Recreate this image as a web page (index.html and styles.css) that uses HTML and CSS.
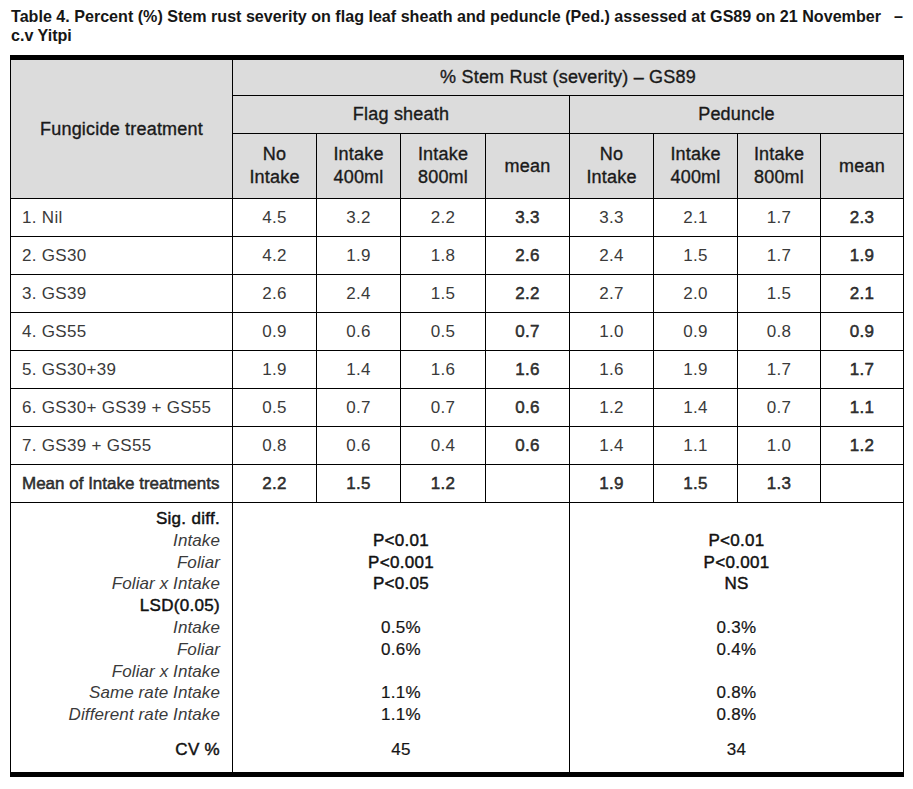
FILE: index.html
```html
<!DOCTYPE html>
<html lang="en">
<head>
<meta charset="utf-8">
<title>Table 4 – Stem rust severity</title>
<link rel="stylesheet" href="styles.css">
</head>
<body>
<div class="page">
  <div class="title">
    <div class="title-line"><span>Table 4. Percent (%) Stem rust severity on flag leaf sheath and peduncle (Ped.) assessed at GS89 on 21 November</span><span class="dash">–</span></div>
    <div>c.v Yitpi</div>
  </div>
  <table class="grid">
    <colgroup>
      <col class="c-treat">
      <col class="c-84"><col class="c-84"><col class="c-85"><col class="c-84">
      <col class="c-84"><col class="c-84"><col class="c-83"><col class="c-83">
    </colgroup>
    <thead>
      <tr class="hr1">
        <th rowspan="3" class="treat-head">Fungicide treatment</th>
        <th colspan="8">% Stem Rust (severity) – GS89</th>
      </tr>
      <tr class="hr2">
        <th colspan="4">Flag sheath</th>
        <th colspan="4">Peduncle</th>
      </tr>
      <tr class="hr3">
        <th>No<br>Intake</th><th>Intake<br>400ml</th><th>Intake<br>800ml</th><th>mean</th>
        <th>No<br>Intake</th><th>Intake<br>400ml</th><th>Intake<br>800ml</th><th>mean</th>
      </tr>
    </thead>
    <tbody>
      <tr class="dr"><td class="name">1. Nil</td><td>4.5</td><td>3.2</td><td>2.2</td><td class="b">3.3</td><td>3.3</td><td>2.1</td><td>1.7</td><td class="b">2.3</td></tr>
      <tr class="dr"><td class="name">2. GS30</td><td>4.2</td><td>1.9</td><td>1.8</td><td class="b">2.6</td><td>2.4</td><td>1.5</td><td>1.7</td><td class="b">1.9</td></tr>
      <tr class="dr"><td class="name">3. GS39</td><td>2.6</td><td>2.4</td><td>1.5</td><td class="b">2.2</td><td>2.7</td><td>2.0</td><td>1.5</td><td class="b">2.1</td></tr>
      <tr class="dr"><td class="name">4. GS55</td><td>0.9</td><td>0.6</td><td>0.5</td><td class="b">0.7</td><td>1.0</td><td>0.9</td><td>0.8</td><td class="b">0.9</td></tr>
      <tr class="dr"><td class="name">5. GS30+39</td><td>1.9</td><td>1.4</td><td>1.6</td><td class="b">1.6</td><td>1.6</td><td>1.9</td><td>1.7</td><td class="b">1.7</td></tr>
      <tr class="dr"><td class="name">6. GS30+ GS39 + GS55</td><td>0.5</td><td>0.7</td><td>0.7</td><td class="b">0.6</td><td>1.2</td><td>1.4</td><td>0.7</td><td class="b">1.1</td></tr>
      <tr class="dr"><td class="name">7. GS39 + GS55</td><td>0.8</td><td>0.6</td><td>0.4</td><td class="b">0.6</td><td>1.4</td><td>1.1</td><td>1.0</td><td class="b">1.2</td></tr>
      <tr class="dr"><td class="name b tight">Mean of Intake treatments</td><td class="b">2.2</td><td class="b">1.5</td><td class="b">1.2</td><td></td><td class="b">1.9</td><td class="b">1.5</td><td class="b">1.3</td><td></td></tr>
      <tr class="stats">
        <td class="labels">
          <div class="ln b">Sig. diff.</div>
          <div class="ln i">Intake</div>
          <div class="ln i">Foliar</div>
          <div class="ln i">Foliar x Intake</div>
          <div class="ln b">LSD(0.05)</div>
          <div class="ln i">Intake</div>
          <div class="ln i">Foliar</div>
          <div class="ln i">Foliar x Intake</div>
          <div class="ln i">Same rate Intake</div>
          <div class="ln i">Different rate Intake</div>
          <div class="ln cv b">CV %</div>
        </td>
        <td colspan="4" class="vals">
          <div class="ln">&nbsp;</div>
          <div class="ln b">P&lt;0.01</div>
          <div class="ln b">P&lt;0.001</div>
          <div class="ln b">P&lt;0.05</div>
          <div class="ln">&nbsp;</div>
          <div class="ln m">0.5%</div>
          <div class="ln m">0.6%</div>
          <div class="ln">&nbsp;</div>
          <div class="ln m">1.1%</div>
          <div class="ln m">1.1%</div>
          <div class="ln cv m">45</div>
        </td>
        <td colspan="4" class="vals">
          <div class="ln">&nbsp;</div>
          <div class="ln b">P&lt;0.01</div>
          <div class="ln b">P&lt;0.001</div>
          <div class="ln b">NS</div>
          <div class="ln">&nbsp;</div>
          <div class="ln m">0.3%</div>
          <div class="ln m">0.4%</div>
          <div class="ln">&nbsp;</div>
          <div class="ln m">0.8%</div>
          <div class="ln m">0.8%</div>
          <div class="ln cv m">34</div>
        </td>
      </tr>
    </tbody>
  </table>
</div>
</body>
</html>
```

FILE: styles.css
```css
html, body {
  margin: 0;
  padding: 0;
  background: #ffffff;
}

.page {
  font-family: "Liberation Sans", Arial, sans-serif;
  color: #1c1c1c;
  padding: 7px 0 0 0;
}

.title {
  font-size: 16.1px;
  font-weight: bold;
  line-height: 18.5px;
  padding-left: 11px;
  width: 892px;
  white-space: nowrap;
  color: #161616;
  margin-bottom: 11px;
}

.title-line {
  display: flex;
  justify-content: space-between;
}

.grid {
  margin-left: 10px;
  width: 894px;
  table-layout: fixed;
  border-collapse: collapse;
  border-top: 5px solid #000;
  border-bottom: 5px solid #000;
  border-left: 1px solid #000;
  border-right: 1px solid #000;
}

.c-treat { width: 222px; }
.c-85 { width: 85px; }
.c-84 { width: 84px; }
.c-83 { width: 83px; }

.grid th,
.grid td {
  border: 1px solid #000;
  padding: 0;
  text-align: center;
  vertical-align: middle;
}

.grid th {
  background: #dcdcdc;
  font-weight: normal;
  font-size: 18px;
  line-height: 23px;
  letter-spacing: 0.2px;
  color: #1a1a1a;
  -webkit-text-stroke: 0.35px #1a1a1a;
}

.hr1 { height: 38px; }
.hr2 { height: 38px; }
.hr3 { height: 65px; }

.dr { height: 38px; }

.grid td {
  font-size: 17px;
  line-height: 21px;
  letter-spacing: 0.3px;
  color: #3a3a3a;
}

.grid td.name {
  text-align: left;
  padding-left: 11px;
}

.b {
  color: #111111;
  -webkit-text-stroke: 0.45px #111111;
}

.grid td.tight {
  letter-spacing: 0;
}

.m {
  color: #151515;
  -webkit-text-stroke: 0.2px #151515;
}

.i {
  font-style: italic;
  letter-spacing: 0.1px;
}

.stats { height: 272px; }

.grid .stats td {
  vertical-align: top;
  padding-top: 5px;
}

.grid td.labels {
  text-align: right;
  padding-right: 12px;
}

.ln {
  line-height: 21.8px;
  white-space: nowrap;
}

.ln.cv {
  margin-top: 12.7px;
}
```
